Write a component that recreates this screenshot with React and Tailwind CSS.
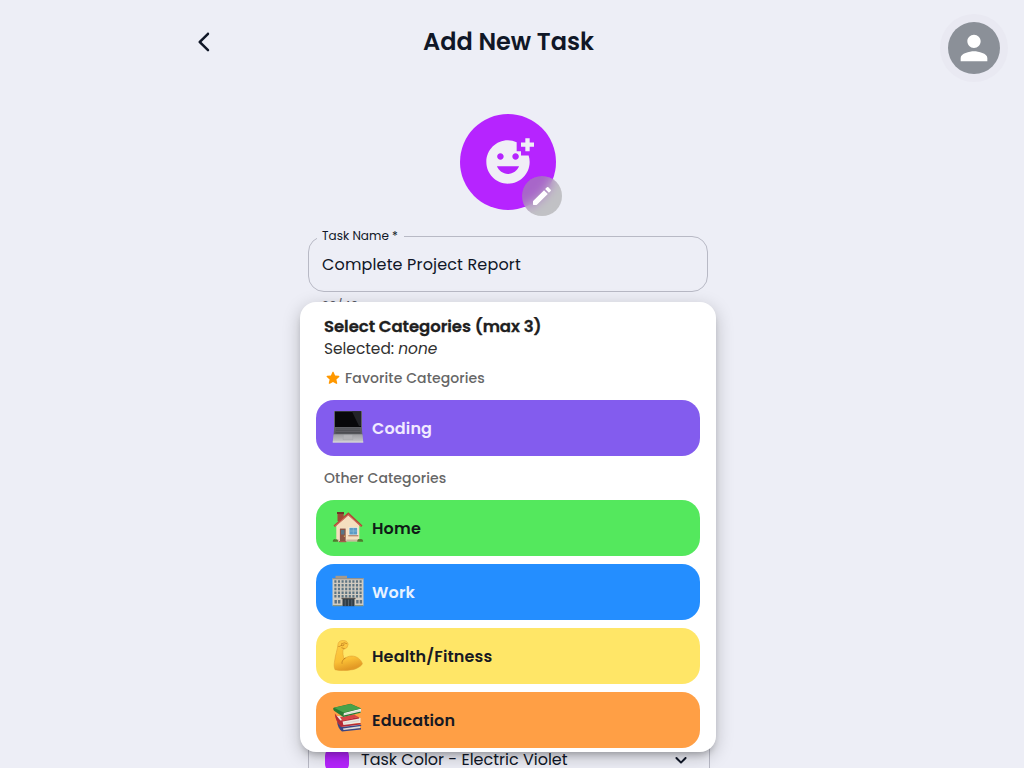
import { MdAddReaction, MdPerson } from 'react-icons/md';

function Laptop() {
  return (
    <svg viewBox="0 0 32 32" className="size-8 shrink-0">
      <defs>
        <linearGradient id="lap" x1="0" y1="0" x2="0" y2="1">
          <stop offset="0" stopColor="#9d9ea2" />
          <stop offset="1" stopColor="#c9c9cc" />
        </linearGradient>
      </defs>
      <path d="M2 -.3h28V20H2z" fill="#77767f" />
      <path d="M2.8 .4h26.4v15.8H2.8z" fill="#08080a" />
      <path d="M20 .6H29v14.5h-2z" fill="#222327" />
      <path d="M2.2 16.2h27.6l.6 8H1.6z" fill="#5f6065" />
      <path d="M4 17.5h24l.6 5H3.4z" fill="#4b4c51" />
      <path d="M4 18.8h24M3.7 20.6h24.6" stroke="#74757a" strokeWidth=".5" />
      <path d="M1.5 23.3h29l.8 8.1H.7z" fill="url(#lap)" />
      <path d="M11.5 24h9l.5 4.6H11z" fill="#b3b3b7" stroke="#a0a1a6" strokeWidth=".4" />
      <path d="M.8 31h30.4" stroke="#dededf" strokeWidth=".8" />
    </svg>
  );
}

function House() {
  return (
    <svg viewBox="0 0 32 32" className="size-8 shrink-0">
      <path d="M5.5 1.5h6.2V10H5.5z" fill="#9c4937" />
      <path d="M5 1h7v2H5z" fill="#733329" />
      <path d="M4.3 13 16.5 3l10.8 10v17.3h-23z" fill="#f5dfbf" />
      <path d="M4.3 28.5h23v2h-23z" fill="#c8b59c" />
      <path d="m1.5 14.5 14.8-13.2L30.5 14.5l-1.4 1.6L16.3 4.6 2.9 16.1z" fill="#b44636" />
      <path d="m3.2 15 13.1-11.2L28.8 15" fill="none" stroke="#df9680" strokeWidth=".6" />
      <path d="M7.2 17h7v13.4h-7z" fill="#fff0d8" />
      <path d="M7.8 17.5h5.9v12.9H7.8z" fill="#8b5544" />
      <path d="M9 19h3.4v4.5H9z" fill="#577587" />
      <circle cx="12.4" cy="25.2" r=".6" fill="#e8c35f" />
      <path d="M16.7 16.2h9.2v8.2h-9.2z" fill="#fff5e3" />
      <path d="M17.4 16.8h7.8v6.8h-7.8z" fill="#5b9cc7" />
      <path d="M21.3 17v6.4M17.5 20h7.6" stroke="#9bc6d9" strokeWidth=".5" />
      <path d="M16.3 24.2h10v1.1h-10z" fill="#aa745d" />
      <path d="M.8 30.7c-.2-2.5 1.8-3.5 3.2-2.3 1.2-.5 2.2.8 2.1 2.3zM25.2 30.7c-.1-2.2 1.3-3.4 2.7-2.5 1.7-.9 3.6.5 3.2 2.5z" fill="#4d7d2d" />
      <path d="M7 30h7.3v1.2H7z" fill="#a85c4d" />
    </svg>
  );
}

function Office() {
  return (
    <svg viewBox="0 0 32 32" className="size-8 shrink-0">
      <path d="M3.5.8h11.5v4H3.5z" fill="#a5998b" />
      <path d="M.5 3.2h31v27.5H.5z" fill="#d1cbc0" />
      <path d="M.5 3.2h31v1.1H.5z" fill="#8d877f" />
      <path d="M3.4 5.3v17.5M7 5.3v17.5M10.6 5.3v17.5M14.2 5.3v17.5M17.8 5.3v17.5M21.4 5.3v17.5M25 5.3v17.5M28.6 5.3v17.5" stroke="#5d7482" strokeWidth="2.1" strokeDasharray="2.5 1.2" />
      <path d="M10.5 23.3h12v7.9h-12z" fill="#303d46" />
      <path d="M13.2 24.5V31M16.5 24.5V31M19.8 24.5V31" stroke="#71808a" strokeWidth=".6" />
      <path d="M9.5 22.8h14v1.3h-14z" fill="#57534f" />
      <path d="M2.5 25h2.4v3.6H2.5zM6 25h2.4v3.6H6zM24.2 25h2.4v3.6h-2.4zM27.7 25h2.4v3.6h-2.4z" fill="#5e7280" />
      <path d="M.8 30h9v1.3h-9zM23 30h8.2v1.3H23z" fill="#87977f" />
    </svg>
  );
}

function Biceps() {
  return (
    <svg viewBox="0 -1 32 32" className="size-8 shrink-0">
      <defs>
        <linearGradient id="arm" x1="0" y1="0" x2=".25" y2="1">
          <stop offset="0" stopColor="#ffce48" />
          <stop offset=".7" stopColor="#fabf35" />
          <stop offset="1" stopColor="#e39a25" />
        </linearGradient>
      </defs>
      <path d="M6.1 3.6C6.9 1.1 9.2.2 11.8.6c2 .2 3.6.8 3.7 2.5.8.5.8 1.6.2 2.6-.4 2-1.6 3.1-3.4 3.2L11 9.7c-.4 3.6.1 6.5 1.3 9.1 2.1-1.8 4.7-2.8 7.4-2.8 4.8 0 9.1 3.2 10.7 7.5-.3 1.1-1 2-2.1 2.7-3.2 2.3-6.5 3.6-9.9 3.7-3.5.8-9.9 1.1-15.4-.2-1.4-3.5-.8-6.6-.2-9.8C3.4 14.9 5.4 10 6.1 3.6z" fill="url(#arm)" stroke="#dd9b30" strokeWidth=".5" />
      <path d="M6.7 6.5c1.5.1 2.6-.6 3.2-2.2M9.7 3.4c1.1-.1 2.4.3 2.3 1.4-.1 1-1.5 1.2-2.6.7M12 2.7l2.8 1M9.8 7.8l2.5.8M12.3 18.9c-1.8 1.2-2.6 2.7-2.3 4.5M12 18.8l1.3-.7" fill="none" stroke="#b9781c" strokeWidth=".7" strokeLinecap="round" />
    </svg>
  );
}

function Books() {
  return (
    <svg viewBox="0 -.5 32 32" className="size-8 shrink-0">
      <path d="m7 20 3 7 18-2v-4z" fill="#dedcd8" />
      <path d="m5 18 4.7 5.5 19.5-2.2v1.2L11 25l.5 1.4 17.5-1.8v1.3L10 28c-2.7-2-4.5-5.5-5-10z" fill="#3b4583" />
      <path d="m4.5 12.5 4.3 9 19.7-2v-5z" fill="#ece9e2" />
      <path d="m2.8 10 5.6 7 18-3.6 1 1.5L10.6 18l.8 3.6 17.2-2v1.3L9 23.4C5.3 20 3.1 15 2.8 10z" fill="#b52a35" />
      <path d="m8 13.5 14-2.5 4.4 2.4-15.9 4.2z" fill="#d64545" />
      <path d="m2 5.2 9.3 8L29 8.7V5.2z" fill="#f1eee4" />
      <path d="M1.6 4.3 18.5.3 29.3 5 11.9 9.4l-.4 2.6 17.2-4v1.2l-17.4 4.3L2 7.2C1.1 6 .9 5.1 1.6 4.3z" fill="#287b32" />
      <path d="M2 4.2 18.5.4 29 5l-17.3 4z" fill="#49a24a" />
      <path d="m12.5 10.7 16-3.6M12 19.7l15-2.5" stroke="#b9bab2" strokeWidth=".4" />
    </svg>
  );
}

function Category({ icon, name, className }) {
  return (
    <div className={`flex h-14 shrink-0 items-center gap-2 rounded-[18px] px-4 text-[16px] font-semibold tracking-[0.15px] ${className}`}>
      <div className="-mt-0.5">{icon}</div>
      <span className="pt-[2px]">{name}</span>
    </div>
  );
}

export default function App() {
  return (
    <div className="relative h-screen overflow-hidden bg-[#edeef6] font-[Poppins,Inter,sans-serif] text-[#101727]">
      <header className="mx-auto flex h-[84px] w-[640px] items-center">
        <div className="flex w-6 justify-center">
          <svg viewBox="0 0 24 24" className="size-6" fill="currentColor">
            <path d="M16.88 2.88c-.49-.49-1.28-.49-1.77 0L6.7 11.29c-.39.39-.39 1.02 0 1.41l8.41 8.41c.49.49 1.28.49 1.77 0s.49-1.28 0-1.77L9.54 12l7.35-7.35c.48-.49.48-1.28-.01-1.77" />
          </svg>
        </div>
        <h1 className="mr-[31px] flex-1 text-center text-[24px] font-semibold">Add New Task</h1>
      </header>

      <div className="absolute top-[14px] right-4 flex size-[68px] items-center justify-center rounded-full bg-[#e9e9f2]">
        <div className="flex size-[52px] items-center justify-center rounded-full bg-[#8b9098] text-white">
          <MdPerson size={40} />
        </div>
      </div>

      <main className="mx-auto w-[408px] pt-[30px] pr-2">
        <div className="relative mx-auto flex size-24 items-center justify-center rounded-full bg-[#b624ff] text-[#f0eef6]">
          <MdAddReaction size={52} />
          <div className="absolute -right-[6.4px] -bottom-[6.4px] flex size-10 items-center justify-center rounded-full bg-[#9c9c9c]/55 text-white backdrop-blur-[6px]">
            <svg viewBox="0 0 24 24" className="size-6" fill="currentColor">
              <path d="M3 17.46v3.04c0 .28.22.5.5.5h3.04c.13 0 .26-.05.35-.15L17.81 9.94l-3.75-3.75L3.15 17.1c-.1.1-.15.22-.15.36M20.71 7.04c.39-.39.39-1.02 0-1.41l-2.34-2.34a.996.996 0 0 0-1.41 0l-1.83 1.83 3.75 3.75z" />
            </svg>
          </div>
        </div>
        <fieldset className="mt-[17px] h-[65px] w-[400px] rounded-2xl border border-[#b8b9c5] pl-[13px]">
          <legend className="-ml-[5px] pr-[6px] pl-[5px] text-[12px] leading-[18px] tracking-[0.03px] whitespace-nowrap">Task Name *</legend>
          <div className="pt-[8px] text-[16px] leading-6 tracking-[0.15px]">Complete Project Report</div>
        </fieldset>
        <div className="mt-[4px] ml-[14px] text-[12px] leading-5 tracking-[0.4px] text-[#555661]">23/40</div>
        <div className="mt-[416px] flex h-14 w-[402px] items-center rounded-b-2xl border border-[#b8b9c5] pl-4">
          <div className="size-6 rounded-lg bg-[#b624ff]" />
          <span className="ml-3 flex-1 text-[16px]">Task Color - Electric Violet</span>
          <svg viewBox="0 0 24 24" className="mr-4 size-6" fill="currentColor">
            <path d="M15.88 9.29 12 13.17 8.12 9.29a.996.996 0 1 0-1.41 1.41l4.59 4.59c.39.39 1.02.39 1.41 0l4.59-4.59c.39-.39.39-1.02 0-1.41-.39-.38-1.03-.39-1.42 0" />
          </svg>
        </div>
      </main>

      <section className="absolute top-[302px] left-[300px] flex h-[450px] w-[416px] flex-col rounded-2xl bg-white px-4 pt-[13px] shadow-[0_5px_7px_-3px_rgba(0,0,0,0.24),0_5px_18px_rgba(0,0,0,0.22)]">
        <div className="pl-2 text-[#202020]">
          <h2 className="pt-px text-[16.5px] leading-[22px] font-semibold tracking-[-0.06px] [-webkit-text-stroke:0.3px_currentColor]">Select Categories (max 3)</h2>
          <p className="text-[15.4px] leading-[21px] text-[#303030]">Selected: <i>none</i></p>
        </div>
        <div className="mt-2 flex h-[22px] items-center pl-2 text-[14px] font-medium tracking-[0.1px] text-[#666]">
          <svg viewBox="0 0 24 24" className="mr-[3px] size-[18px]" fill="#ff9800">
            <path d="m12 17.27 4.15 2.51c.76.46 1.69-.22 1.49-1.08l-1.1-4.72 3.67-3.18c.67-.58.31-1.68-.57-1.75l-4.83-.41-1.89-4.46c-.34-.81-1.5-.81-1.84 0L9.19 8.63l-4.83.41c-.88.07-1.24 1.17-.57 1.75l3.67 3.18-1.1 4.72c-.2.86.73 1.54 1.49 1.08z" />
          </svg>
          <span>Favorite Categories</span>
        </div>
        <div className="mt-[11px] flex flex-col gap-2">
          <Category icon={<Laptop />} name="Coding" className="bg-[#835cee] text-[#f1eaff]" />
          <div className="my-[2px] flex h-6 items-center pl-2 text-[14px] font-medium tracking-[0.1px] text-[#666]">Other Categories</div>
          <Category icon={<House />} name="Home" className="bg-[#54e85d] text-[#101b17]" />
          <Category icon={<Office />} name="Work" className="bg-[#248eff] text-[#e7f2ff]" />
          <Category icon={<Biceps />} name="Health/Fitness" className="bg-[#ffe667] text-[#171923]" />
          <Category icon={<Books />} name="Education" className="bg-[#ff9f45] text-[#171923]" />
        </div>
      </section>
    </div>
  );
}
